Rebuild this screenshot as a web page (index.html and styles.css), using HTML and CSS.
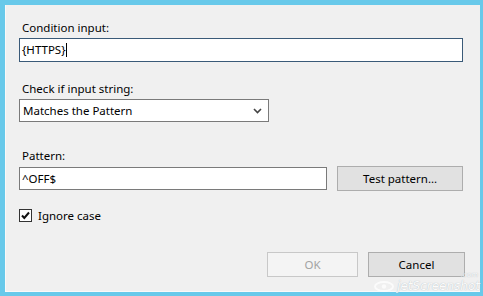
FILE: index.html
```html
<!DOCTYPE html>
<html>
<head>
    <meta charset="utf-8">
    <link rel="stylesheet" href="styles.css">
</head>
<body>
    <div class="frame">
        <div class="dialog">
            <div class="field">
                <label class="caption">Condition input:</label>
                <div class="textbox focused">{HTTPS}<span class="caret"></span></div>
            </div>

            <div class="field">
                <label class="caption">Check if input string:</label>
                <div class="combo">
                    <span>Matches the Pattern</span>
                    <svg class="chevron" width="9" height="6" viewBox="0 0 9 6">
                        <polyline points="1,1 4.5,4.5 8,1" fill="none" stroke="#444" stroke-width="1.6"/>
                    </svg>
                </div>
            </div>

            <div class="field pattern">
                <label class="caption">Pattern:</label>
                <div class="pattern-row">
                    <div class="textbox short">^OFF$</div>
                    <button class="btn test">Test pattern...</button>
                </div>
            </div>

            <div class="check-row">
                <svg class="checkbox" width="13" height="13" viewBox="0 0 13 13">
                    <rect x="0.5" y="0.5" width="12" height="12" fill="#fff" stroke="#333"/>
                    <polyline points="3,6.5 5.3,9 10,3.5" fill="none" stroke="#111" stroke-width="2"/>
                </svg>
                <span>Ignore case</span>
            </div>

            <div class="actions">
                <button class="btn ok" disabled>OK</button>
                <button class="btn cancel">Cancel</button>
            </div>
        </div>

        <!-- watermark from the capture tool -->
        <div class="mark">
            <svg width="22" height="11" viewBox="0 0 22 11">
                <ellipse cx="11" cy="5.5" rx="9" ry="4.5" fill="none" stroke="#fff" stroke-width="2"/>
                <circle cx="11" cy="5.5" r="2.2" fill="#fff"/>
            </svg>
            <span>jetScreenshot</span>
            <span class="tld">.com</span>
        </div>
    </div>
</body>
</html>
```

FILE: styles.css
```css
html,
body {
    margin: 0;
    height: 100%;
}
body {
    background-color: #68c9ea;
    font-family: "Segoe UI", "Noto Sans", sans-serif;
    font-size: 11.5px;
    color: #000;
}

.frame {
    position: relative;
    height: 296px;
    width: 483px;
    padding: 5px 3px 4px 5px;
    box-sizing: border-box;
}

.dialog {
    height: 100%;
    box-sizing: border-box;
    background-color: #f0f0f0;
    border-left: 1px solid #f9f9f9;
    border-bottom: 1px solid #f9f9f9;
    padding: 15px 17px 0 13px;
    display: flex;
    flex-direction: column;
}

.field {
    display: flex;
    flex-direction: column;
}
.field + .field {
    margin-top: 19px;
}
.field.pattern {
    margin-top: 26px;
}

.caption {
    height: 16px;
    line-height: 16px;
    padding-left: 3px;
    margin-bottom: 2px;
}

.textbox {
    height: 24px;
    line-height: 22px;
    box-sizing: border-box;
    border: 1px solid #7a7a7a;
    background-color: #fff;
    padding-left: 2px;
}
.textbox.focused {
    border-color: #3a5a78;
}
.caret {
    display: inline-block;
    width: 1px;
    height: 14px;
    background-color: #000;
    vertical-align: -3px;
}

.combo {
    width: 250px;
    height: 23px;
    box-sizing: border-box;
    border: 1px solid #7a7a7a;
    background-color: #fff;
    padding: 0 6px 0 3px;
    display: flex;
    align-items: center;
    justify-content: space-between;
}

.pattern-row {
    display: flex;
    align-items: center;
    gap: 10px;
}
.textbox.short {
    width: 309px;
    height: 23px;
}

.btn {
    font-family: inherit;
    font-size: 11.5px;
    color: #000;
    height: 25px;
    box-sizing: border-box;
    background-color: #e1e1e1;
    border: 1px solid #adadad;
    padding: 0;
}
.btn.test {
    width: 126px;
}

.check-row {
    margin-top: 17px;
    display: flex;
    align-items: center;
    gap: 6px;
    height: 14px;
}

.actions {
    margin-top: auto;
    margin-bottom: 14px;
    display: flex;
    justify-content: flex-end;
    gap: 10px;
    margin-right: -2px;
}
.btn.ok {
    width: 91px;
    color: #a3a3a3;
    background-color: #f4f4f4;
    border-color: #c8c8c8;
}
.btn.cancel {
    width: 97px;
}

.mark {
    position: absolute;
    right: 3px;
    bottom: 4px;
    display: flex;
    align-items: center;
    gap: 2px;
    font-family: "DejaVu Sans", sans-serif;
    font-style: italic;
    font-size: 12px;
    line-height: 12px;
    color: #fff;
    opacity: 0.75;
    text-shadow: 0 0 1px #8a9aa5;
}
.mark .tld {
    position: absolute;
    right: 2px;
    top: -8px;
    font-size: 7px;
    line-height: 7px;
}
```
